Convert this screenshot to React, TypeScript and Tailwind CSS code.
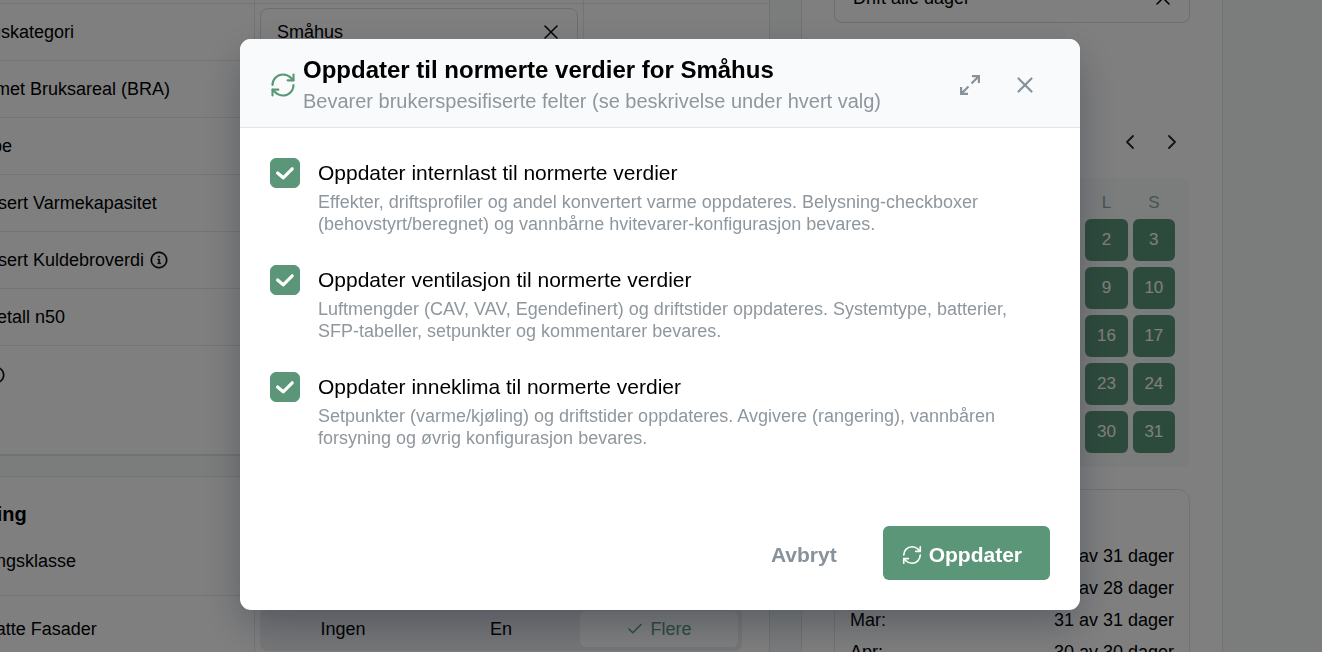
import { useState } from 'react';
import { Check, ChevronLeft, ChevronRight, RefreshCw, X } from 'lucide-react';
import { GoInfo } from 'react-icons/go';

const OPTIONS = [
  {
    id: 'internlast',
    label: 'Oppdater internlast til normerte verdier',
    description:
      'Effekter, driftsprofiler og andel konvertert varme oppdateres. Belysning-checkboxer (behovstyrt/beregnet) og vannbårne hvitevarer-konfigurasjon bevares.',
  },
  {
    id: 'ventilasjon',
    label: 'Oppdater ventilasjon til normerte verdier',
    description:
      'Luftmengder (CAV, VAV, Egendefinert) og driftstider oppdateres. Systemtype, batterier, SFP-tabeller, setpunkter og kommentarer bevares.',
  },
  {
    id: 'inneklima',
    label: 'Oppdater inneklima til normerte verdier',
    description:
      'Setpunkter (varme/kjøling) og driftstider oppdateres. Avgivere (rangering), vannbåren forsyning og øvrig konfigurasjon bevares.',
  },
];

const FIELDS = [
  { label: 'Oppvarmet Bruksareal (BRA)' },
  { label: 'Sonetype' },
  { label: 'Normalisert Varmekapasitet' },
  { label: 'Normalisert Kuldebroverdi', info: true },
  { label: 'Lekkasjetall n50' },
  { label: 'Klima', info: true },
];

const WEEKDAYS = ['M', 'T', 'O', 'T', 'F', 'L', 'S'];
const DAYS = Array.from({ length: 31 }, (_, i) => i + 1);

const MONTHS = [
  { name: 'Jan', days: 31 },
  { name: 'Feb', days: 28 },
  { name: 'Mar', days: 31 },
  { name: 'Apr', days: 30 },
  { name: 'Mai', days: 31 },
];

function ExpandIcon() {
  return (
    <svg className="h-5 w-5" viewBox="0 0 20 20" fill="none" stroke="currentColor" strokeWidth={2.2}>
      <path d="M12 1.1h6.9V8M18.5 1.5l-7 7" />
      <path d="M8 18.9H1.1V12M1.5 18.5l7-7" />
    </svg>
  );
}

function BuildingCard() {
  return (
    <section className="h-[510px] border-r border-b-2 border-[#e2e4e4] bg-white">
      <div className="flex h-[58px] border-b border-[#e9e9e9]">
        <div className="w-[335px] border-r border-[#e9e9e9]" />
        <div className="w-[329px] border-r border-[#e9e9e9]" />
      </div>
      <div className="flex h-[57px] border-b border-[#e9e9e9]">
        <div className="flex w-[335px] items-center border-r border-[#e9e9e9] pl-4">Bygningskategori</div>
        <div className="flex w-[329px] items-center border-r border-[#e9e9e9] px-[5px]">
          <button className="flex h-12 w-full items-center justify-between rounded-lg border border-[#dddddd] pr-3.5 pl-4">
            Småhus
            <X className="h-6 w-6" strokeWidth={1.5} />
          </button>
        </div>
      </div>
      {FIELDS.map((field, i) => (
        <div
          key={field.label}
          className={`flex h-[57px] items-center gap-1.5 pl-4 ${i < FIELDS.length - 1 ? 'border-b border-[#e9e9e9]' : ''}`}
        >
          {field.label}
          {field.info && <GoInfo className="h-[18px] w-[18px]" strokeWidth={0.6} />}
        </div>
      ))}
    </section>
  );
}

function ShieldingCard() {
  return (
    <section className="h-[300px] border-t border-r border-[#e2e4e4] bg-white">
      <h2 className="pt-[23px] pl-2.5 text-[20px] leading-7 font-bold">Skjerming</h2>
      <div className="flex h-[68px] items-center border-b border-[#e9e9e9] pl-4">Skjermingsklasse</div>
      <div className="flex h-[66px]">
        <div className="flex w-[335px] items-center border-r border-[#e9e9e9] pl-4">Vindutsatte Fasader</div>
        <div className="flex flex-1 items-center pr-[27px] pl-[5px]">
          <div className="grid h-11 w-full grid-cols-3 rounded-lg bg-[#eceef1] p-1">
            <button>Ingen</button>
            <button>En</button>
            <button className="flex items-center justify-center gap-1.5 rounded-md bg-white text-[#5b9679]">
              <Check className="h-[18px] w-[18px]" />
              Flere
            </button>
          </div>
        </div>
      </div>
    </section>
  );
}

function ScheduleCard() {
  return (
    <aside className="h-[760px] w-[422px] shrink-0 border-x border-[#e2e4e4] bg-white px-8 pt-[27px]">
      <button className="flex h-[50px] w-full items-center justify-between rounded-lg border border-[#dddddd] pr-3.5 pl-[18px]">
        Drift alle dager
        <X className="h-6 w-6" strokeWidth={1.5} />
      </button>
      <div className="mt-[107px] flex justify-end gap-[18px] pr-1.5 text-[#1e293b]">
        <button aria-label="Forrige måned">
          <ChevronLeft className="h-6 w-6" strokeWidth={1.8} />
        </button>
        <button aria-label="Neste måned">
          <ChevronRight className="h-6 w-6" strokeWidth={1.8} />
        </button>
      </div>
      <div className="mt-6 h-[289px] rounded-lg bg-[#f6f9f8] px-[15px] pt-3.5">
        <div className="grid grid-cols-7 gap-[5px] text-center text-[17px] leading-[21px] text-[#93aaa3]">
          {WEEKDAYS.map((day, i) => (
            <span key={i}>{day}</span>
          ))}
        </div>
        <div className="mt-1.5 grid grid-cols-7 gap-x-[5px] gap-y-1.5 text-[17px] text-white">
          {DAYS.map((day) => (
            <button key={day} className={`h-[42px] rounded-md bg-[#5b9679] ${day === 1 ? 'col-start-5' : ''}`}>
              {day}
            </button>
          ))}
        </div>
      </div>
      <div className="mt-[22px] rounded-xl border border-[#e4e4e4] px-[15px] pt-[50px] pb-4">
        {MONTHS.map((month) => (
          <div key={month.name} className="flex h-8 items-center justify-between">
            <span>{month.name}:</span>
            <span>
              {month.days} av {month.days} dager
            </span>
          </div>
        ))}
      </div>
    </aside>
  );
}

function UpdateDialog() {
  const [selected, setSelected] = useState<string[]>(OPTIONS.map((option) => option.id));

  const toggle = (id: string) => {
    setSelected((prev) => (prev.includes(id) ? prev.filter((item) => item !== id) : [...prev, id]));
  };

  return (
    <div
      role="dialog"
      aria-modal="true"
      aria-labelledby="dialog-title"
      className="w-full max-w-[840px] overflow-hidden rounded-[11px] bg-white shadow-[0_16px_40px_-4px_rgba(15,23,42,0.35)]"
    >
      {/* Header */}
      <div className="flex h-[89px] items-center border-b border-[#e3e6e8] bg-[#f9fafc] pt-[3px] pr-[42px] pl-[29px]">
        <RefreshCw className="h-7 w-7 shrink-0 text-[#5b9679]" strokeWidth={1.8} />
        <div className="ml-1.5 flex-1">
          <h1 id="dialog-title" className="text-[24px] leading-8 font-bold">
            Oppdater til normerte verdier for Småhus
          </h1>
          <p className="text-[20px] leading-[30px] text-[#8e979e]">
            Bevarer brukerspesifiserte felter (se beskrivelse under hvert valg)
          </p>
        </div>
        <div className="flex items-center gap-8 text-[#87929a]">
          <button aria-label="Utvid">
            <ExpandIcon />
          </button>
          <button aria-label="Lukk">
            <X className="h-[26px] w-[26px]" strokeWidth={2} />
          </button>
        </div>
      </div>

      {/* Valg */}
      <div className="flex flex-col gap-[30px] px-[30px] pt-[30px]">
        {OPTIONS.map((option) => (
          <div key={option.id} className="flex gap-[18px]">
            <span className="relative h-[30px] w-[30px] shrink-0">
              <input
                id={option.id}
                type="checkbox"
                checked={selected.includes(option.id)}
                onChange={() => toggle(option.id)}
                className="peer block h-[30px] w-[30px] appearance-none rounded-md border border-[#5b9679] checked:bg-[#5b9679]"
              />
              <svg
                className="pointer-events-none absolute inset-0 hidden h-[30px] w-[30px] text-white peer-checked:block"
                viewBox="0 0 30 30"
                fill="none"
                stroke="currentColor"
                strokeWidth={3.2}
                strokeLinecap="round"
                strokeLinejoin="round"
              >
                <path d="M7.6 15l5.6 4.8 9-9" />
              </svg>
            </span>
            <div className="flex-1">
              <label htmlFor={option.id} className="block text-[21px] leading-[30px]">
                {option.label}
              </label>
              <p className="mt-[3px] text-[18px] leading-[22px] text-[#8e979e]">{option.description}</p>
            </div>
          </div>
        ))}
      </div>

      {/* Knapper */}
      <div className="mt-[77px] flex justify-end gap-[18px] px-[30px] pb-[30px] text-[21px] font-bold">
        <button className="h-[54px] px-7 pt-1 text-[#87929a]">Avbryt</button>
        <button className="flex h-[54px] items-center gap-1.5 rounded-md bg-[#5b9679] pt-1 pr-7 pl-[18px] text-white">
          <RefreshCw className="h-[22px] w-[22px]" strokeWidth={1.8} />
          Oppdater
        </button>
      </div>
    </div>
  );
}

export default function App() {
  return (
    <div className="h-screen overflow-hidden bg-[#f6f9f8] font-['Liberation_Sans',Arial,sans-serif] text-[18px] text-black">
      <main className="-mt-[54px] -ml-20 flex gap-[31px] pr-[99px]">
        <div className="flex min-w-0 flex-1 flex-col gap-5">
          <BuildingCard />
          <ShieldingCard />
        </div>
        <ScheduleCard />
      </main>
      <div className="fixed inset-0 flex items-start justify-center bg-black/50 pt-[39px] pr-0.5">
        <UpdateDialog />
      </div>
    </div>
  );
}
